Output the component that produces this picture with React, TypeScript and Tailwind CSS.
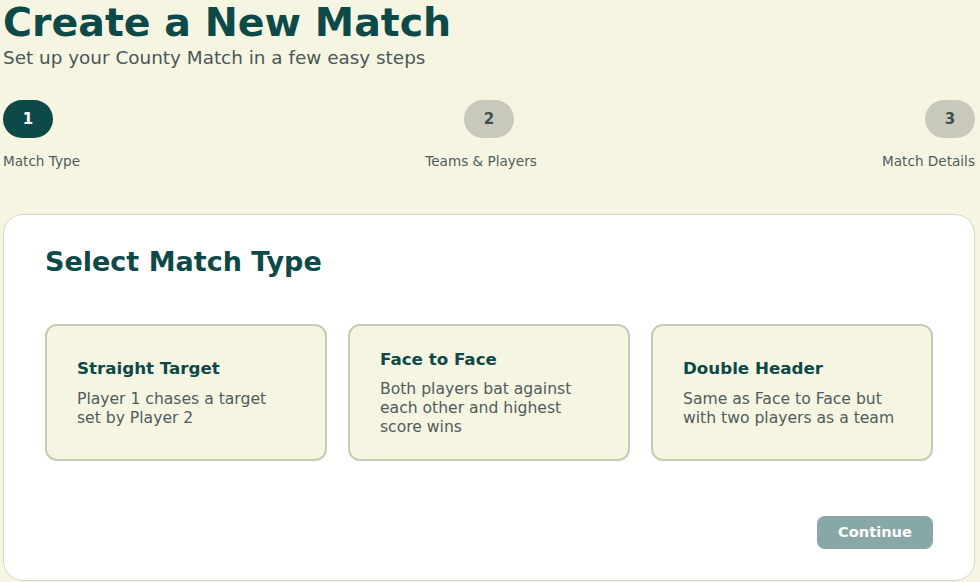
import React from 'react';

interface MatchType {
  id: string;
  title: string;
  description: string;
}

interface Step {
  n: number;
  label: string;
  align: string;
}

const font = { fontFamily: '"DejaVu Sans", "Liberation Sans", sans-serif' };

export default function App() {
  const steps: Step[] = [
    { n: 1, label: 'Match Type', align: 'items-start' },
    { n: 2, label: 'Teams & Players', align: 'items-center translate-x-[8px]' },
    { n: 3, label: 'Match Details', align: 'items-end' },
  ];

  const types: MatchType[] = [
    { id: 'straight', title: 'Straight Target', description: 'Player 1 chases a target set by Player 2' },
    { id: 'face', title: 'Face to Face', description: 'Both players bat against each other and highest score wins' },
    { id: 'double', title: 'Double Header', description: 'Same as Face to Face but with two players as a team' },
  ];

  return (
    <div className="min-h-screen bg-[#f6f5e2] pl-[3px] pr-[5px]" style={font}>
      {/* Header */}
      <h1 className="text-[39.5px] leading-none font-bold text-[#0c4947] pt-[3px]">Create a New Match</h1>
      <p className="mt-[6px] text-[18.4px] leading-none text-[#4a5757]">Set up your County Match in a few easy steps</p>

      {/* Stepper */}
      <div className="mt-[33px] flex justify-between">
        {steps.map((step) => (
          <div key={step.n} className={`flex flex-col ${step.align}`}>
            <div
              className={`w-[50px] h-[38px] rounded-full flex items-center justify-center text-[15px] font-bold ${
                step.n === 1 ? 'bg-[#0c4947] text-white' : 'bg-[#c9c9bb] text-[#3d4f4f]'
              }`}
            >
              {step.n}
            </div>
            <span className={`mt-[17px] text-[13.6px] leading-none text-[#4f5c5c] ${step.n === 2 ? '-translate-x-[8px]' : ''}`}>
              {step.label}
            </span>
          </div>
        ))}
      </div>

      {/* Card */}
      <div className="mt-[45px] bg-white border border-[#d6d6c6] rounded-[20px] pt-[33px] px-[41px] pb-[31px]">
        <h2 className="text-[27px] leading-none font-bold text-[#0c4947]">Select Match Type</h2>
        <div className="mt-[49px] grid grid-cols-3 gap-[21px]">
          {types.map((t) => (
            <div
              key={t.id}
              className="h-[137px] bg-[#f6f5e2] border-2 border-[#c8c9b6] rounded-[12px] pl-[30px] pr-[34px] pt-[4px] flex flex-col justify-center"
            >
              <h3 className="text-[16.7px] leading-none font-bold text-[#0c4947]">{t.title}</h3>
              <p className="mt-[13px] text-[15.6px] leading-[19px] text-[#4f5c5c]">{t.description}</p>
            </div>
          ))}
        </div>
        <div className="mt-[55px] flex justify-end">
          <button className="w-[116px] h-[33px] rounded-[8px] bg-[#87a8a4] text-white text-[14.6px] font-bold">
            Continue
          </button>
        </div>
      </div>
    </div>
  );
}
